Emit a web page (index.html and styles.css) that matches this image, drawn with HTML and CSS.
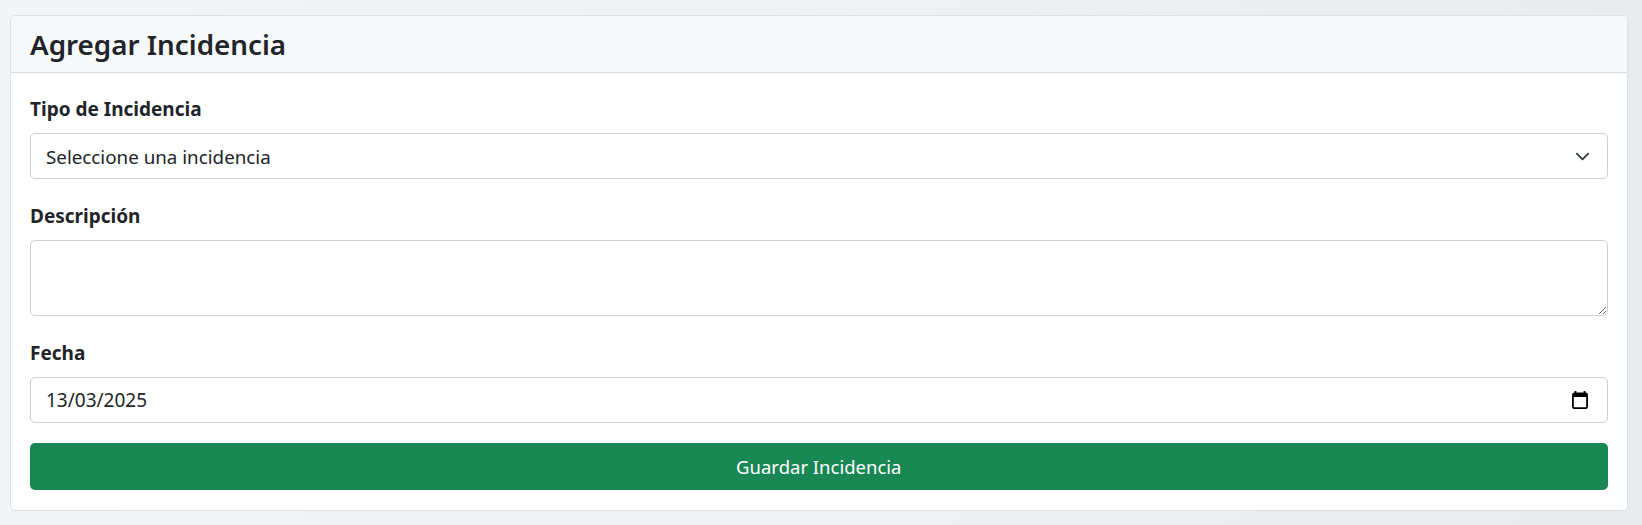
FILE: index.html
```html
<!DOCTYPE html>
<html lang="es">

<head>
    <meta charset="utf-8">
    <title>Agregar Incidencia</title>
    <link rel="stylesheet" href="styles.css">
</head>

<body>
    <div class="card">
        <div class="card-header">
            <h3 class="card-title">Agregar Incidencia</h3>
        </div>
        <form class="card-body">
            <div class="form-group">
                <label class="form-label" for="tipo">Tipo de Incidencia</label>
                <select class="form-control form-select" id="tipo">
                    <option>Seleccione una incidencia</option>
                </select>
            </div>
            <div class="form-group">
                <label class="form-label" for="descripcion">Descripción</label>
                <textarea class="form-control form-textarea" id="descripcion"></textarea>
            </div>
            <div class="form-group">
                <label class="form-label" for="fecha">Fecha</label>
                <div class="date-field">
                    <input class="form-control" id="fecha" type="text" value="13/03/2025">
                    <svg class="date-icon" viewBox="0 0 16 18" width="16" height="18" aria-hidden="true">
                        <path d="M3.5 0v3M12.5 0v3" stroke="#000" stroke-width="1.8" fill="none"/>
                        <rect x="0.9" y="2.4" width="14.2" height="14.7" rx="1.6" fill="#fff" stroke="#000" stroke-width="1.8"/>
                        <rect x="0.9" y="2.4" width="14.2" height="3.6" fill="#000"/>
                    </svg>
                </div>
            </div>
            <button class="btn-save" type="button">Guardar Incidencia</button>
        </form>
    </div>
</body>

</html>
```

FILE: styles.css
```css
body {
    margin: 0;
    padding: 15px 14px 14px 9.6px;
    min-height: 525px;
    box-sizing: border-box;
    background: linear-gradient(90deg, #f4f5f7, #e9ecef);
    font-family: "Noto Sans", "Open Sans", sans-serif;
    color: #212529;
}

.card {
    background: #fff;
    border: 1px solid #dee0e3;
    border-radius: 5px;
}

.card-header {
    height: 56px;
    padding: 0 19.4px;
    display: flex;
    align-items: center;
    background: #f7f8fa;
    border-bottom: 1px solid #d9dbde;
    border-radius: 4px 4px 0 0;
}

.card-title {
    margin: 0;
    font-size: 27.8px;
    font-weight: 600;
}

.card-body {
    padding: 18px 19.4px 20px;
    display: flex;
    flex-direction: column;
    gap: 19px;
}

.form-label {
    display: block;
    height: 42px;
    line-height: 36px;
    font-size: 19px;
    font-weight: 700;
}

.form-control {
    display: block;
    width: 100%;
    height: 46px;
    box-sizing: border-box;
    padding: 0 15px;
    font-family: inherit;
    font-size: 19px;
    color: #212529;
    background-color: #fff;
    border: 1px solid #ced0d4;
    border-radius: 5px;
}

.form-select {
    padding-top: 2px;
    font-size: 18.8px;
    appearance: none;
    background-image: url("data:image/svg+xml,%3csvg xmlns='http://www.w3.org/2000/svg' viewBox='0 0 16 16'%3e%3cpath fill='none' stroke='%23343a40' stroke-linecap='round' stroke-linejoin='round' stroke-width='2' d='m2 5 6 6 6-6'/%3e%3c/svg%3e");
    background-repeat: no-repeat;
    background-position: right 15px center;
    background-size: 19px 15px;
}

.form-textarea {
    height: 76px;
}

.date-field {
    position: relative;
}

.date-icon {
    position: absolute;
    top: 13.5px;
    right: 19.5px;
}

.btn-save {
    height: 47px;
    margin-top: 1px;
    padding: 0;
    font-family: inherit;
    font-size: 18.5px;
    color: #fff;
    background: #198754;
    border: 0;
    border-radius: 5px;
}
```
